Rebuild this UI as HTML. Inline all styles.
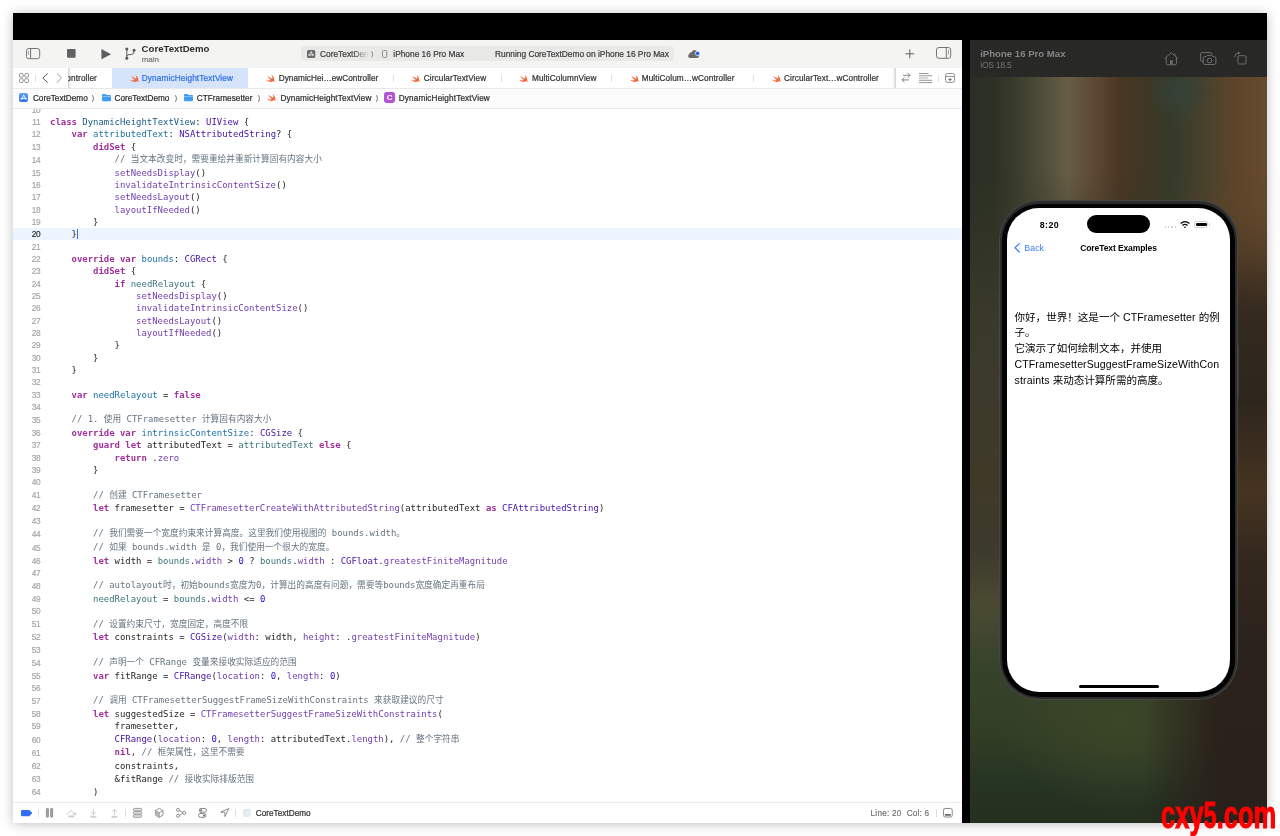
<!DOCTYPE html>
<html lang="zh"><head><meta charset="utf-8"><title>Xcode - DynamicHeightTextView</title>
<style>
*{box-sizing:border-box;margin:0;padding:0}
html,body{width:1280px;height:836px;overflow:hidden;background:#fff}
body{position:relative;font-family:"Liberation Sans","Noto Sans CJK SC",sans-serif;font-size:8px;color:#262626}
#frame{position:absolute;left:13px;top:13px;width:1254px;height:810px;background:#000;box-shadow:0 1px 11px rgba(0,0,0,.26)}
#xc{will-change:transform;position:absolute;left:13px;top:40px;width:948.5px;height:783px;background:#fff;overflow:hidden}
#toolbar{position:absolute;left:0;top:0;width:100%;height:28px;background:#f4f4f3}
#tabs{position:absolute;left:0;top:28px;width:100%;height:21px;background:#fff;border-bottom:1px solid #e9e9e9}
#jump{position:absolute;left:0;top:49px;width:100%;height:20px;background:#fcfcfc;border-bottom:1px solid #e9e9e9}
#editor{position:absolute;left:0;top:69px;width:100%;height:694.1px;background:#fff;overflow:hidden}
#bottom{position:absolute;left:0;top:763.1px;width:100%;height:20px;background:#fff;box-shadow:0 -1px 0 #ebebeb}
/* code */
.ln{position:absolute;left:0;width:100%;height:12px;line-height:12px;white-space:pre;margin-top:-69px}
.ln b{position:absolute;left:0;width:27.2px;text-align:right;font-weight:400;font-size:8.3px;letter-spacing:-.35px;color:#a3a3a3;font-family:"Liberation Sans",sans-serif}
.ln.cur b{color:#222}
.ln code{position:absolute;left:37px;font-family:"DejaVu Sans Mono","Liberation Mono",monospace;font-size:8.958px;color:#262626}
.ln code i{font-style:normal;font-family:"Noto Sans CJK SC",sans-serif;font-size:8.7px}
.k{color:#a3309a;font-weight:700}
.t{color:#1a5a83}.d{color:#1d72a8}.p{color:#3c757c}.s{color:#4510a6}.f{color:#7440ae}.c{color:#667481}.n{color:#280ed2}
#curline{position:absolute;left:0;width:100%;top:119.1px;height:12.4px;background:#ecf5ff}
#caret{position:absolute;left:64px;top:119.6px;width:1.3px;height:10.6px;background:#2f6fe0}
#sim{will-change:transform;position:absolute;left:970px;top:40px;width:297px;height:783px;background:#33352a;overflow:hidden}
#wm{will-change:transform;position:absolute;left:1160.8px;top:791.6px;font-family:"Liberation Sans",sans-serif;font-weight:700;font-size:39.6px;color:#fe0000;line-height:44px;transform-origin:0 0;transform:scaleX(.64);white-space:nowrap;-webkit-text-stroke:1.1px #fe0000;letter-spacing:.2px}
#wm span{font-size:36.2px}
.ic{position:absolute;display:block;overflow:visible}
.tt{position:absolute;left:128.6px;top:1.6px;font-weight:700;font-size:9.6px;line-height:14px;color:#2b2b2b;letter-spacing:.02px;white-space:nowrap}
.ts{position:absolute;left:128.7px;top:13.9px;font-size:8px;line-height:12px;color:#7b7b7b;white-space:nowrap}
.pill{position:absolute;left:287.5px;top:5.6px;width:373px;height:15.6px;border-radius:4px;background:#e9e9e8}
.pt{position:absolute;top:1.1px;line-height:15.6px;font-size:8.35px;color:#404040;white-space:nowrap}
.fade{position:absolute;left:52px;top:0;width:17px;height:15.6px;background:linear-gradient(90deg,rgba(233,233,232,0),#e9e9e8 95%)}
.tabact{position:absolute;left:99px;top:0;width:136.3px;height:20px;background:#d6e4fb}
.tb{position:absolute;top:.7px;line-height:20.6px;font-size:8.2px;color:#333;white-space:nowrap}
.tb.act{color:#2f6fe4}
.tsep{position:absolute;top:6.6px;width:1px;height:7.6px;background:#e0e0e0}
.nav{position:absolute;left:0;top:0;width:55.3px;height:20.4px;background:#fff}
.navsh{position:absolute;left:55.3px;top:0;width:3.6px;height:20.4px;background:linear-gradient(90deg,rgba(0,0,0,.2),rgba(0,0,0,.05) 50%,rgba(0,0,0,0))}
.tools{position:absolute;left:882.6px;top:0;width:66px;height:20.4px;background:#fff}
.toolsh{position:absolute;left:879px;top:0;width:3.6px;height:20.4px;background:linear-gradient(270deg,rgba(0,0,0,.2),rgba(0,0,0,.05) 50%,rgba(0,0,0,0))}
.jt{position:absolute;top:.3px;line-height:19.6px;font-size:8.2px;color:#2e2e2e;white-space:nowrap}
.cic{position:absolute;top:2.9px;width:11px;height:11.4px;border-radius:2.4px;background:#b652d8;color:#fff;font-weight:700;font-size:8px;line-height:11.6px;text-align:center}
.bsep{position:absolute;top:5.9px;width:1px;height:8px;background:#dedede}
.bt{position:absolute;top:1.2px;line-height:20.2px;font-size:8.2px;color:#757575;white-space:nowrap}
.shead{position:absolute;left:0;top:0;width:297px;height:37.2px;background:#282827}
.st1{position:absolute;left:10.2px;top:7.4px;font-weight:700;font-size:9.6px;line-height:13px;color:#868686;white-space:nowrap;letter-spacing:.02px}
.st2{position:absolute;left:10.3px;top:18.6px;font-size:8.7px;letter-spacing:-.33px;line-height:12px;color:#747474;white-space:nowrap}
.phone{position:absolute;left:29px;top:160px;width:239px;height:500px;border-radius:40px;background:#474642}
.bezel{position:absolute;left:1px;top:1px;right:1px;bottom:1px;border-radius:39px;background:#2c2c2c}
.bezel:before{content:"";position:absolute;left:2px;top:2.5px;right:2px;bottom:2px;border-radius:37px;background:#030303}
.screen{position:absolute;left:7px;top:7px;right:7px;bottom:7px;border-radius:32px;background:#fff;overflow:hidden}
.ptime{position:absolute;left:32.8px;top:10.7px;font-weight:700;font-size:8.8px;line-height:13px;color:#000;letter-spacing:.4px}
.island{position:absolute;left:79.8px;top:7.1px;width:63.6px;height:18.2px;border-radius:9.1px;background:#000}
.dots{position:absolute;left:158px;top:18.3px;width:12px;height:2px}
.dots i{position:absolute;top:0;width:1.3px;height:1.3px;border-radius:1px;background:#c8c8c8}
.dots i:nth-child(1){left:0}.dots i:nth-child(2){left:3.2px}.dots i:nth-child(3){left:6.3px}.dots i:nth-child(4){left:9.5px}
.batt{position:absolute;left:187px;top:12.9px;width:14.2px;height:6.9px;border-radius:2.2px;border:.8px solid #d0d0d0;background:#fff}
.batt b{position:absolute;left:.7px;top:.7px;right:.7px;bottom:.7px;border-radius:1.3px;background:#000}
.batt:after{content:"";position:absolute;left:13.8px;top:1.6px;width:1px;height:2.2px;border-radius:0 1px 1px 0;background:#d0d0d0}
.pback{position:absolute;left:17.3px;top:34.4px;font-size:8.8px;line-height:13px;color:#3b82f6;white-space:nowrap;letter-spacing:.05px}
.ptitle{position:absolute;left:0;width:100%;top:34.4px;text-align:center;font-weight:700;font-size:8.5px;letter-spacing:-.1px;line-height:13px;color:#000;white-space:nowrap}
.ptext{position:absolute;left:7.5px;top:101.7px;font-size:10.55px;line-height:15.75px;color:#000;white-space:nowrap;font-family:"Liberation Sans","Noto Sans CJK SC",sans-serif}
.ptext p{height:15.75px}
.homebar{position:absolute;left:71.9px;bottom:3.9px;width:80px;height:3.3px;border-radius:2px;background:#000}
.wall{position:absolute;left:0;top:37px;width:297px;height:746px;overflow:hidden;background:#2f2a20}
.w2{position:absolute;left:0;top:0;width:297px;height:746px;background:radial-gradient(ellipse 120px 90px at 150px 645px,rgba(61,71,40,.85),rgba(60,70,40,.5) 50%,rgba(56,67,42,0) 100%),linear-gradient(180deg,#353729 0,#353729 123px,#3a3a2c 273px,#3f3927 403px,#3c3a2c 474px,#4a4a32 528px,#37422a 591px,#323f25 654px,#263423 704px,#25301f 746px)}
.w3{position:absolute;left:0;top:0;width:297px;height:746px;background:linear-gradient(180deg,#5c4429 0,#5c4429 123px,#4c3926 163px,#3a2d20 208px,#33291f 243px,#2e261d 323px,#463421 413px,#33281e 483px,#2b221c 573px,#2a201b 746px);-webkit-mask-image:linear-gradient(90deg,transparent 0,transparent 175px,#000 250px);mask-image:linear-gradient(90deg,transparent 0,transparent 175px,#000 250px)}
.w1{position:absolute;left:0;top:0;width:297px;height:260px;background:linear-gradient(90deg,#2b2f23 0,#2d3125 8%,#383a2b 14.5%,#4a4a37 22.5%,#675d45 33%,#5f4b35 40.7%,#4a3623 50.5%,#3f3724 59%,#343a2a 67.7%,#4a422c 80%,#5e452b 90%,#674b2e 100%);-webkit-mask-image:linear-gradient(180deg,#000 0,#000 95px,transparent 235px);mask-image:linear-gradient(180deg,#000 0,#000 95px,transparent 235px)}
.w4{position:absolute;left:175px;top:-10px;width:70px;height:60px;background:radial-gradient(ellipse 35px 30px at 35px 25px,rgba(54,66,58,.9),rgba(54,66,58,0));}
.ptext span{letter-spacing:.15px}.ptext span.w{letter-spacing:.1px}
.tb,.jt,.pt,.bt,.ts{-webkit-text-stroke:.22px currentColor}
.ln b{-webkit-text-stroke:.15px currentColor}
.sb{position:absolute;width:2.4px;border-radius:1px;background:#3b3b39}
.ln code.u{top:-.8px}
.pji{position:absolute;left:6.1px;top:3.8px;width:9.4px;height:9.4px;border-radius:2.1px;background:linear-gradient(180deg,#5fa1fa,#2e6fee)}

</style></head>
<body>
<div id="frame"></div>
<div id="xc">
<div id="toolbar">
<svg class="ic" style="left:12.8px;top:7.9px" width="15" height="12" viewBox="0 0 15 12"><rect x=".5" y=".5" width="13.2" height="10.2" rx="2.3" fill="none" stroke="#747474"/><path d="M4.6 .5v10.2" stroke="#747474" fill="none"/><path d="M2.6 2.9v3.8" stroke="#8a8a8a" stroke-width=".8" fill="none"/></svg>
<svg class="ic" style="left:53.8px;top:9px" width="9" height="9" viewBox="0 0 9 9"><rect x="0" y="0" width="8.6" height="8.8" rx="1" fill="#626262"/></svg>
<svg class="ic" style="left:87.9px;top:8.5px" width="11" height="11" viewBox="0 0 11 11"><path d="M.4 .5Q.4 0 .9 .2L9.6 4.9Q10 5.1 9.6 5.4L.9 10.1Q.4 10.3 .4 9.8Z" fill="#5f5f5f"/></svg>
<svg class="ic" style="left:111px;top:7px" width="13" height="14" viewBox="0 0 13 14"><g fill="none" stroke="#5a5a5a" stroke-width="1"><path d="M2.8 3.2v7"/><path d="M10 4.4v.6q0 2.2-2.4 2.4L5 7.6Q2.8 7.8 2.8 9.6"/></g><circle cx="2.8" cy="2.1" r="1.5" fill="#5a5a5a"/><circle cx="2.8" cy="11.2" r="1.5" fill="#5a5a5a"/><circle cx="10" cy="3.3" r="1.5" fill="#5a5a5a"/></svg>
<div class="tt">CoreTextDemo</div>
<div class="ts">main</div>
<div class="pill">
<svg class="ic" style="left:6.5px;top:4.1px" width="9" height="9" viewBox="0 0 9 9"><rect width="8.3" height="8.1" rx="1.6" fill="#6c6c6c"/><path d="M4.15 1.9L2.2 5.7M4.15 1.9L6.1 5.7M1.7 4.9h4.9" stroke="#f0f0f0" stroke-width=".8" fill="none" stroke-linecap="round"/></svg>
<span class="pt" style="left:19.5px;width:49px;overflow:hidden">CoreTextDemo</span><span class="fade"></span>
<svg class="ic" style="left:70px;top:5.2px" width="4" height="7" viewBox="0 0 4 7"><path d="M.7 .3Q2.9 3.3 .7 6.3" stroke="#6e6e6e" stroke-width=".8" fill="none"/></svg>
<svg class="ic" style="left:81.5px;top:4.1px" width="6" height="9" viewBox="0 0 6 9"><rect x=".5" y=".5" width="4.3" height="6.9" rx="1" fill="none" stroke="#8c8c8c"/></svg>
<span class="pt" style="left:92.8px">iPhone 16 Pro Max</span>
<span class="pt" style="left:194.5px">Running CoreTextDemo on iPhone 16 Pro Max</span>
</div>
<svg class="ic" style="left:674.9px;top:9.9px" width="12" height="8.2" viewBox="0 0 12 8.2"><path d="M2.2 8Q.1 8 .1 6Q.1 4.4 1.4 4Q1.4 2.4 2.9 2.2Q3.3 2.1 3.7 2.3Q4.5 .1 6.6 .1Q8.8 .1 9.3 2.6Q11.2 3 11.2 5.2Q11.2 8 8.8 8Z" fill="#6a6a6a"/><circle cx="9.6" cy="3.4" r="2.25" fill="#1f5ff0" stroke="#f6f5f2" stroke-width=".8"/></svg>
<svg class="ic" style="left:892px;top:8.6px" width="10" height="10" viewBox="0 0 10 10"><path d="M4.8 .4v8.8M.4 4.8h8.8" stroke="#5e5e5e" stroke-width="1" fill="none"/></svg>
<svg class="ic" style="left:922.6px;top:7.4px" width="16" height="12" viewBox="0 0 16 12"><rect x=".5" y=".5" width="14.2" height="10.8" rx="2.4" fill="none" stroke="#757575"/><path d="M10.3 .5v10.8" stroke="#757575" fill="none"/><path d="M12.5 3v4.2" stroke="#8a8a8a" stroke-width=".8" fill="none"/></svg>

</div>
<div id="tabs">
<div class="tabact"></div>
<span class="tb clip" style="left:49.10px;letter-spacing:0.120px">controller</span>
<svg class="ic sw" style="left:116.8px;top:6.5px" width="8.8" height="7.2" viewBox="2.4 3.4 18.3 16.6" preserveAspectRatio="none"><path fill="#f0653a" d="M13.543 3.41c4.114 2.47 6.545 7.162 5.549 11.131-.024.093-.05.181-.076.272l.002.001c2.062 2.538 1.5 5.258 1.236 4.745-1.072-2.086-3.066-1.568-4.088-1.043a6.803 6.803 0 0 1-.281.158l-.02.012-.002.002c-2.115 1.123-4.957 1.205-7.812-.022a12.568 12.568 0 0 1-5.64-4.838c.649.48 1.35.902 2.097 1.252 3.019 1.414 6.051 1.311 8.197-.002C9.651 12.73 7.101 9.67 5.146 7.191a10.628 10.628 0 0 1-1.005-1.384c2.34 2.142 6.038 4.83 7.365 5.576C8.69 8.408 6.208 4.743 6.324 4.86c4.436 4.47 8.528 6.996 8.528 6.996.154.085.27.154.36.213.085-.215.16-.437.224-.668.708-2.588-.09-5.548-1.893-7.992z"/></svg>
<span class="tb act" style="left:128.75px;letter-spacing:0.154px">DynamicHeightTextView</span>
<svg class="ic sw" style="left:253.25px;top:6.5px" width="8.8" height="7.2" viewBox="2.4 3.4 18.3 16.6" preserveAspectRatio="none"><path fill="#f0653a" d="M13.543 3.41c4.114 2.47 6.545 7.162 5.549 11.131-.024.093-.05.181-.076.272l.002.001c2.062 2.538 1.5 5.258 1.236 4.745-1.072-2.086-3.066-1.568-4.088-1.043a6.803 6.803 0 0 1-.281.158l-.02.012-.002.002c-2.115 1.123-4.957 1.205-7.812-.022a12.568 12.568 0 0 1-5.64-4.838c.649.48 1.35.902 2.097 1.252 3.019 1.414 6.051 1.311 8.197-.002C9.651 12.73 7.101 9.67 5.146 7.191a10.628 10.628 0 0 1-1.005-1.384c2.34 2.142 6.038 4.83 7.365 5.576C8.69 8.408 6.208 4.743 6.324 4.86c4.436 4.47 8.528 6.996 8.528 6.996.154.085.27.154.36.213.085-.215.16-.437.224-.668.708-2.588-.09-5.548-1.893-7.992z"/></svg>
<span class="tb " style="left:265.75px;letter-spacing:0.057px">DynamicHei…ewController</span>
<svg class="ic sw" style="left:398.2px;top:6.5px" width="8.8" height="7.2" viewBox="2.4 3.4 18.3 16.6" preserveAspectRatio="none"><path fill="#f0653a" d="M13.543 3.41c4.114 2.47 6.545 7.162 5.549 11.131-.024.093-.05.181-.076.272l.002.001c2.062 2.538 1.5 5.258 1.236 4.745-1.072-2.086-3.066-1.568-4.088-1.043a6.803 6.803 0 0 1-.281.158l-.02.012-.002.002c-2.115 1.123-4.957 1.205-7.812-.022a12.568 12.568 0 0 1-5.64-4.838c.649.48 1.35.902 2.097 1.252 3.019 1.414 6.051 1.311 8.197-.002C9.651 12.73 7.101 9.67 5.146 7.191a10.628 10.628 0 0 1-1.005-1.384c2.34 2.142 6.038 4.83 7.365 5.576C8.69 8.408 6.208 4.743 6.324 4.86c4.436 4.47 8.528 6.996 8.528 6.996.154.085.27.154.36.213.085-.215.16-.437.224-.668.708-2.588-.09-5.548-1.893-7.992z"/></svg>
<span class="tb " style="left:410.80px;letter-spacing:0.099px">CircularTextView</span>
<svg class="ic sw" style="left:506.4px;top:6.5px" width="8.8" height="7.2" viewBox="2.4 3.4 18.3 16.6" preserveAspectRatio="none"><path fill="#f0653a" d="M13.543 3.41c4.114 2.47 6.545 7.162 5.549 11.131-.024.093-.05.181-.076.272l.002.001c2.062 2.538 1.5 5.258 1.236 4.745-1.072-2.086-3.066-1.568-4.088-1.043a6.803 6.803 0 0 1-.281.158l-.02.012-.002.002c-2.115 1.123-4.957 1.205-7.812-.022a12.568 12.568 0 0 1-5.64-4.838c.649.48 1.35.902 2.097 1.252 3.019 1.414 6.051 1.311 8.197-.002C9.651 12.73 7.101 9.67 5.146 7.191a10.628 10.628 0 0 1-1.005-1.384c2.34 2.142 6.038 4.83 7.365 5.576C8.69 8.408 6.208 4.743 6.324 4.86c4.436 4.47 8.528 6.996 8.528 6.996.154.085.27.154.36.213.085-.215.16-.437.224-.668.708-2.588-.09-5.548-1.893-7.992z"/></svg>
<span class="tb " style="left:519.00px;letter-spacing:0.094px">MultiColumnView</span>
<svg class="ic sw" style="left:616.8px;top:6.5px" width="8.8" height="7.2" viewBox="2.4 3.4 18.3 16.6" preserveAspectRatio="none"><path fill="#f0653a" d="M13.543 3.41c4.114 2.47 6.545 7.162 5.549 11.131-.024.093-.05.181-.076.272l.002.001c2.062 2.538 1.5 5.258 1.236 4.745-1.072-2.086-3.066-1.568-4.088-1.043a6.803 6.803 0 0 1-.281.158l-.02.012-.002.002c-2.115 1.123-4.957 1.205-7.812-.022a12.568 12.568 0 0 1-5.64-4.838c.649.48 1.35.902 2.097 1.252 3.019 1.414 6.051 1.311 8.197-.002C9.651 12.73 7.101 9.67 5.146 7.191a10.628 10.628 0 0 1-1.005-1.384c2.34 2.142 6.038 4.83 7.365 5.576C8.69 8.408 6.208 4.743 6.324 4.86c4.436 4.47 8.528 6.996 8.528 6.996.154.085.27.154.36.213.085-.215.16-.437.224-.668.708-2.588-.09-5.548-1.893-7.992z"/></svg>
<span class="tb " style="left:628.80px;letter-spacing:0.101px">MultiColum…wController</span>
<svg class="ic sw" style="left:759.2px;top:6.5px" width="8.8" height="7.2" viewBox="2.4 3.4 18.3 16.6" preserveAspectRatio="none"><path fill="#f0653a" d="M13.543 3.41c4.114 2.47 6.545 7.162 5.549 11.131-.024.093-.05.181-.076.272l.002.001c2.062 2.538 1.5 5.258 1.236 4.745-1.072-2.086-3.066-1.568-4.088-1.043a6.803 6.803 0 0 1-.281.158l-.02.012-.002.002c-2.115 1.123-4.957 1.205-7.812-.022a12.568 12.568 0 0 1-5.64-4.838c.649.48 1.35.902 2.097 1.252 3.019 1.414 6.051 1.311 8.197-.002C9.651 12.73 7.101 9.67 5.146 7.191a10.628 10.628 0 0 1-1.005-1.384c2.34 2.142 6.038 4.83 7.365 5.576C8.69 8.408 6.208 4.743 6.324 4.86c4.436 4.47 8.528 6.996 8.528 6.996.154.085.27.154.36.213.085-.215.16-.437.224-.668.708-2.588-.09-5.548-1.893-7.992z"/></svg>
<span class="tb " style="left:771.10px;letter-spacing:0.081px">CircularText…wController</span>
<i class="tsep" style="left:379.9px"></i>
<i class="tsep" style="left:487.9px"></i>
<i class="tsep" style="left:598.2px"></i>
<i class="tsep" style="left:740.1px"></i>
<div class="nav">
<svg class="ic" style="left:6px;top:5px" width="10" height="10" viewBox="0 0 10 10"><g fill="none" stroke="#8a8a8a" stroke-width=".9"><rect x=".5" y=".5" width="3.7" height="3.7" rx=".9"/><rect x="5.8" y=".5" width="3.7" height="3.7" rx=".9"/><rect x=".5" y="5.8" width="3.7" height="3.7" rx=".9"/><rect x="5.8" y="5.8" width="3.7" height="3.7" rx=".9"/></g></svg>
<i class="tsep" style="left:22px;background:#e2e2e2"></i>
<svg class="ic" style="left:29px;top:5px" width="7" height="10" viewBox="0 0 7 10"><path d="M5.6 .5L.8 5L5.6 9.5" fill="none" stroke="#5a5a5a" stroke-width="1"/></svg>
<svg class="ic" style="left:43px;top:5px" width="7" height="10" viewBox="0 0 7 10"><path d="M.8 .5L5.6 5L.8 9.5" fill="none" stroke="#a0a0a0" stroke-width="1"/></svg>
</div><div class="navsh"></div>
<div class="tools">
<svg class="ic" style="left:5.3px;top:3.8px" width="10" height="11" viewBox="0 0 10 11"><g fill="none" stroke="#7c7c7c" stroke-width=".9" stroke-linecap="round" stroke-linejoin="round"><path d="M2.4 3.3H8.9M6.8 1.1L9 3.3L6.8 5.5"/><path d="M7.6 7.9H1.1M3.2 5.7L1 7.9L3.2 10.1"/></g></svg>
<svg class="ic" style="left:23px;top:5.2px" width="14" height="11" viewBox="0 0 14 11"><g fill="none" stroke-width=".9"><path d="M0 .5H9.4" stroke="#8a8a8a"/><path d="M0 2.75H13.2" stroke="#8a8a8a"/><path d="M0 5H9.2" stroke="#c4c4c4" stroke-width="1.3"/><path d="M0 7.3H13.2" stroke="#8a8a8a"/><path d="M0 9.6H13.2" stroke="#8a8a8a"/></g></svg>
<i class="tsep" style="left:42.4px;background:#e2e2e2"></i>
<svg class="ic" style="left:49.4px;top:5.4px" width="11" height="11" viewBox="0 0 11 11"><g fill="none" stroke="#858585" stroke-width=".9"><rect x=".5" y=".5" width="9.1" height="8.9" rx="2"/><path d="M.5 3.4H9.6"/><path d="M5.05 4.9V8.3M3.3 6.6H6.8" stroke="#6a6a6a"/></g></svg>
</div><div class="toolsh"></div>
</div>
<div id="jump">
<div class="pji"><svg class="ic" style="left:0;top:0" width="9.4" height="9.4" viewBox="0 0 9.4 9.4"><path d="M4.7 2.1L2.5 6.4M4.7 2.1L6.9 6.4M1.9 5.5h5.6" stroke="#fff" stroke-width=".9" fill="none" stroke-linecap="round"/></svg></div>
<span class="jt" style="left:19.90px;letter-spacing:0.018px">CoreTextDemo</span>
<svg class="ic" style="left:78.80px;top:6.1px" width="3" height="7" viewBox="0 0 3 7"><path d="M.5 .2Q2.6 3.5 .5 6.8" stroke="#5e5e5e" stroke-width=".85" fill="none"/></svg>
<svg class="ic" style="left:88.50px;top:5.2px" width="9" height="7.2" viewBox="0 0 9 7.2"><path d="M0 1Q0 0 1 0H3.2Q3.8 0 4.2 .5L4.6 1H8Q9 1 9 2V6.2Q9 7.2 8 7.2H1Q0 7.2 0 6.2Z" fill="#3f9df3"/><path d="M0 2.2H9V3H0Z" fill="#8ecbfb"/></svg>
<span class="jt" style="left:101.50px;letter-spacing:0.026px">CoreTextDemo</span>
<svg class="ic" style="left:161.90px;top:6.1px" width="3" height="7" viewBox="0 0 3 7"><path d="M.5 .2Q2.6 3.5 .5 6.8" stroke="#5e5e5e" stroke-width=".85" fill="none"/></svg>
<svg class="ic" style="left:170.80px;top:5.2px" width="9" height="7.2" viewBox="0 0 9 7.2"><path d="M0 1Q0 0 1 0H3.2Q3.8 0 4.2 .5L4.6 1H8Q9 1 9 2V6.2Q9 7.2 8 7.2H1Q0 7.2 0 6.2Z" fill="#3f9df3"/><path d="M0 2.2H9V3H0Z" fill="#8ecbfb"/></svg>
<span class="jt" style="left:183.75px;letter-spacing:0.048px">CTFramesetter</span>
<svg class="ic" style="left:244.60px;top:6.1px" width="3" height="7" viewBox="0 0 3 7"><path d="M.5 .2Q2.6 3.5 .5 6.8" stroke="#5e5e5e" stroke-width=".85" fill="none"/></svg>
<svg class="ic sw" style="left:254.2px;top:5.4px" width="8.8" height="7.2" viewBox="2.4 3.4 18.3 16.6" preserveAspectRatio="none"><path fill="#f0653a" d="M13.543 3.41c4.114 2.47 6.545 7.162 5.549 11.131-.024.093-.05.181-.076.272l.002.001c2.062 2.538 1.5 5.258 1.236 4.745-1.072-2.086-3.066-1.568-4.088-1.043a6.803 6.803 0 0 1-.281.158l-.02.012-.002.002c-2.115 1.123-4.957 1.205-7.812-.022a12.568 12.568 0 0 1-5.64-4.838c.649.48 1.35.902 2.097 1.252 3.019 1.414 6.051 1.311 8.197-.002C9.651 12.73 7.101 9.67 5.146 7.191a10.628 10.628 0 0 1-1.005-1.384c2.34 2.142 6.038 4.83 7.365 5.576C8.69 8.408 6.208 4.743 6.324 4.86c4.436 4.47 8.528 6.996 8.528 6.996.154.085.27.154.36.213.085-.215.16-.437.224-.668.708-2.588-.09-5.548-1.893-7.992z"/></svg>
<span class="jt" style="left:267.40px;letter-spacing:0.145px">DynamicHeightTextView</span>
<svg class="ic" style="left:362.60px;top:6.1px" width="3" height="7" viewBox="0 0 3 7"><path d="M.5 .2Q2.6 3.5 .5 6.8" stroke="#5e5e5e" stroke-width=".85" fill="none"/></svg>
<div class="cic" style="left:371.10px">C</div>
<span class="jt" style="left:385.75px;letter-spacing:0.145px">DynamicHeightTextView</span>
</div>
<div id="editor">
<div id="curline"></div>
<div class="ln" style="top:63.73px"><b>10</b><code></code></div>
<div class="ln" style="top:76.05px"><b>11</b><code><span class="k">class</span> <span class="t">DynamicHeightTextView</span>: <span class="s">UIView</span> {</code></div>
<div class="ln" style="top:88.38px"><b>12</b><code>    <span class="k">var</span> <span class="d">attributedText</span>: <span class="s">NSAttributedString</span>? {</code></div>
<div class="ln" style="top:100.70px"><b>13</b><code>        <span class="k">didSet</span> {</code></div>
<div class="ln" style="top:113.72px"><b>14</b><code class="u">            <span class="c">// <i>当文本改变时，需要重绘并重新计算固有内容大小</i></span></code></div>
<div class="ln" style="top:126.77px"><b>15</b><code>            <span class="f">setNeedsDisplay</span>()</code></div>
<div class="ln" style="top:139.10px"><b>16</b><code>            <span class="f">invalidateIntrinsicContentSize</span>()</code></div>
<div class="ln" style="top:151.42px"><b>17</b><code>            <span class="f">setNeedsLayout</span>()</code></div>
<div class="ln" style="top:163.75px"><b>18</b><code>            <span class="f">layoutIfNeeded</span>()</code></div>
<div class="ln" style="top:176.07px"><b>19</b><code>        }</code></div>
<div class="ln cur" style="top:188.40px"><b>20</b><code>    }</code></div>
<div class="ln" style="top:200.72px"><b>21</b><code></code></div>
<div class="ln" style="top:213.05px"><b>22</b><code>    <span class="k">override</span> <span class="k">var</span> <span class="d">bounds</span>: <span class="s">CGRect</span> {</code></div>
<div class="ln" style="top:225.37px"><b>23</b><code>        <span class="k">didSet</span> {</code></div>
<div class="ln" style="top:237.70px"><b>24</b><code>            <span class="k">if</span> <span class="p">needRelayout</span> {</code></div>
<div class="ln" style="top:250.02px"><b>25</b><code>                <span class="f">setNeedsDisplay</span>()</code></div>
<div class="ln" style="top:262.35px"><b>26</b><code>                <span class="f">invalidateIntrinsicContentSize</span>()</code></div>
<div class="ln" style="top:274.67px"><b>27</b><code>                <span class="f">setNeedsLayout</span>()</code></div>
<div class="ln" style="top:287.00px"><b>28</b><code>                <span class="f">layoutIfNeeded</span>()</code></div>
<div class="ln" style="top:299.32px"><b>29</b><code>            }</code></div>
<div class="ln" style="top:311.65px"><b>30</b><code>        }</code></div>
<div class="ln" style="top:323.97px"><b>31</b><code>    }</code></div>
<div class="ln" style="top:336.30px"><b>32</b><code></code></div>
<div class="ln" style="top:348.62px"><b>33</b><code>    <span class="k">var</span> <span class="d">needRelayout</span> = <span class="k">false</span></code></div>
<div class="ln" style="top:360.95px"><b>34</b><code></code></div>
<div class="ln" style="top:373.97px"><b>35</b><code class="u">    <span class="c">// 1. <i>使用</i> CTFramesetter <i>计算固有内容大小</i></span></code></div>
<div class="ln" style="top:387.02px"><b>36</b><code>    <span class="k">override</span> <span class="k">var</span> <span class="d">intrinsicContentSize</span>: <span class="s">CGSize</span> {</code></div>
<div class="ln" style="top:399.35px"><b>37</b><code>        <span class="k">guard</span> <span class="k">let</span> attributedText = <span class="p">attributedText</span> <span class="k">else</span> {</code></div>
<div class="ln" style="top:411.67px"><b>38</b><code>            <span class="k">return</span> .<span class="f">zero</span></code></div>
<div class="ln" style="top:424.00px"><b>39</b><code>        }</code></div>
<div class="ln" style="top:436.32px"><b>40</b><code></code></div>
<div class="ln" style="top:449.35px"><b>41</b><code class="u">        <span class="c">// <i>创建</i> CTFramesetter</span></code></div>
<div class="ln" style="top:462.40px"><b>42</b><code>        <span class="k">let</span> framesetter = <span class="f">CTFramesetterCreateWithAttributedString</span>(attributedText <span class="k">as</span> <span class="s">CFAttributedString</span>)</code></div>
<div class="ln" style="top:474.72px"><b>43</b><code></code></div>
<div class="ln" style="top:487.75px"><b>44</b><code class="u">        <span class="c">// <i>我们需要一个宽度约束来计算高度。这里我们使用视图的</i> bounds.width<i>。</i></span></code></div>
<div class="ln" style="top:501.50px"><b>45</b><code class="u">        <span class="c">// <i>如果</i> bounds.width <i>是</i> 0<i>，我们使用一个很大的宽度。</i></span></code></div>
<div class="ln" style="top:514.55px"><b>46</b><code>        <span class="k">let</span> width = <span class="p">bounds</span>.<span class="f">width</span> &gt; <span class="n">0</span> ? <span class="p">bounds</span>.<span class="f">width</span> : <span class="s">CGFloat</span>.<span class="f">greatestFiniteMagnitude</span></code></div>
<div class="ln" style="top:526.87px"><b>47</b><code></code></div>
<div class="ln" style="top:539.90px"><b>48</b><code class="u">        <span class="c">// autolayout<i>时，初始</i>bounds<i>宽度为</i>0<i>，计算出的高度有问题，需要等</i>bounds<i>宽度确定再重布局</i></span></code></div>
<div class="ln" style="top:552.95px"><b>49</b><code>        <span class="p">needRelayout</span> = <span class="p">bounds</span>.<span class="f">width</span> &lt;= <span class="n">0</span></code></div>
<div class="ln" style="top:565.27px"><b>50</b><code></code></div>
<div class="ln" style="top:578.30px"><b>51</b><code class="u">        <span class="c">// <i>设置约束尺寸，宽度固定，高度不限</i></span></code></div>
<div class="ln" style="top:591.35px"><b>52</b><code>        <span class="k">let</span> constraints = <span class="s">CGSize</span>(<span class="f">width</span>: width, <span class="f">height</span>: .<span class="f">greatestFiniteMagnitude</span>)</code></div>
<div class="ln" style="top:603.67px"><b>53</b><code></code></div>
<div class="ln" style="top:616.70px"><b>54</b><code class="u">        <span class="c">// <i>声明一个</i> CFRange <i>变量来接收实际适应的范围</i></span></code></div>
<div class="ln" style="top:629.75px"><b>55</b><code>        <span class="k">var</span> fitRange = <span class="s">CFRange</span>(<span class="f">location</span>: <span class="n">0</span>, <span class="f">length</span>: <span class="n">0</span>)</code></div>
<div class="ln" style="top:642.08px"><b>56</b><code></code></div>
<div class="ln" style="top:655.10px"><b>57</b><code class="u">        <span class="c">// <i>调用</i> CTFramesetterSuggestFrameSizeWithConstraints <i>来获取建议的尺寸</i></span></code></div>
<div class="ln" style="top:668.15px"><b>58</b><code>        <span class="k">let</span> suggestedSize = <span class="f">CTFramesetterSuggestFrameSizeWithConstraints</span>(</code></div>
<div class="ln" style="top:680.48px"><b>59</b><code>            framesetter,</code></div>
<div class="ln" style="top:693.50px"><b>60</b><code class="u">            <span class="s">CFRange</span>(<span class="f">location</span>: <span class="n">0</span>, <span class="f">length</span>: attributedText.<span class="f">length</span>), <span class="c">// <i>整个字符串</i></span></code></div>
<div class="ln" style="top:707.25px"><b>61</b><code class="u">            <span class="k">nil</span>, <span class="c">// <i>框架属性，这里不需要</i></span></code></div>
<div class="ln" style="top:720.30px"><b>62</b><code>            constraints,</code></div>
<div class="ln" style="top:733.33px"><b>63</b><code class="u">            &amp;fitRange <span class="c">// <i>接收实际排版范围</i></span></code></div>
<div class="ln" style="top:746.38px"><b>64</b><code>        )</code></div>
<div class="ln" style="top:758.70px"><b>65</b><code></code></div>
<div id="caret"></div>
</div>
<div id="bottom">
<svg class="ic" style="left:8.10px;top:7.10px" width="11" height="6.2" viewBox="0 0 11 6.2"><path d="M1.2 0H8.2L10.9 2.6V3.6L8.2 6.2H1.2Q0 6.2 0 5V1.2Q0 0 1.2 0Z" fill="#2f6ff0"/></svg>
<i class="bsep" style="left:24.6px"></i>
<svg class="ic" style="left:32.70px;top:5.00px" width="7.2" height="9.7" viewBox="0 0 7.2 9.7"><g fill="#a2a2a2" stroke="#7e7e7e" stroke-width=".7"><rect x=".35" y=".35" width="2.1" height="9" rx="1"/><rect x="4.6" y=".35" width="2.1" height="9" rx="1"/></g></svg>
<svg class="ic" style="left:53.10px;top:6.50px" width="10.2" height="8" viewBox="0 0 10.2 8"><g fill="none" stroke="#c6c6c6" stroke-width=".9" stroke-linejoin="round" stroke-linecap="round"><path d="M.6 4.6L4.9 .6L9.2 4.4"/><path d="M9.4 2.4V4.6H7.2"/></g><rect x="2.2" y="5.6" width="6" height="2" rx="1" fill="#cfcfcf"/></svg>
<svg class="ic" style="left:76.50px;top:5.50px" width="6.8" height="9" viewBox="0 0 6.8 9"><g fill="none" stroke="#c6c6c6" stroke-width=".9" stroke-linecap="round" stroke-linejoin="round"><path d="M3.4 .4V5.2"/><path d="M1.2 3.2L3.4 5.4L5.6 3.2"/></g><rect x=".3" y="6.8" width="6.2" height="2" rx="1" fill="#cfcfcf"/></svg>
<svg class="ic" style="left:98.10px;top:5.50px" width="6.8" height="9" viewBox="0 0 6.8 9"><g fill="none" stroke="#c6c6c6" stroke-width=".9" stroke-linecap="round" stroke-linejoin="round"><path d="M3.4 5.6V.6"/><path d="M1.2 2.6L3.4 .4L5.6 2.6"/></g><rect x=".3" y="6.8" width="6.2" height="2" rx="1" fill="#cfcfcf"/></svg>
<i class="bsep" style="left:112.1px"></i>
<svg class="ic" style="left:119.70px;top:5.00px" width="9.2" height="9.8" viewBox="0 0 9.2 9.8"><g fill="#e6e6e6" stroke="#858585" stroke-width=".8"><rect x=".4" y=".4" width="8.3" height="2.5" rx="1"/><rect x=".4" y="3.6" width="8.3" height="2.5" rx="1"/><rect x=".4" y="6.8" width="8.3" height="2.5" rx="1"/></g></svg>
<svg class="ic" style="left:141.90px;top:5.00px" width="8.4" height="9.8" viewBox="0 0 8.4 9.8"><g fill="none" stroke="#7d7d7d" stroke-width=".8" stroke-linejoin="round"><path d="M4.2 .4L8 2.5V7.2L4.2 9.4L.4 7.2V2.5Z"/><path d="M.4 2.5L4.2 4.7L8 2.5M4.2 4.7V9.4"/></g><path d="M.6 2.8L4 4.8V9L.6 7Z" fill="#b4b4b4"/></svg>
<svg class="ic" style="left:162.70px;top:5.00px" width="10.2" height="9.8" viewBox="0 0 10.2 9.8"><g fill="none" stroke="#787878" stroke-width=".8"><circle cx="2" cy="1.9" r="1.5"/><circle cx="2" cy="7.9" r="1.5"/><circle cx="8.2" cy="4.9" r="1.5"/><path d="M3.3 2.6L6.9 4.3M3.3 7.2L6.9 5.5"/></g></svg>
<svg class="ic" style="left:185.00px;top:5.00px" width="9.2" height="9.8" viewBox="0 0 9.2 9.8"><g fill="none" stroke="#6f6f6f" stroke-width=".85"><rect x="1.2" y=".45" width="7.4" height="3.7" rx="1.85"/><rect x=".5" y="5.6" width="7.4" height="3.7" rx="1.85"/><path d="M3 4.2L2.4 5.6"/></g><circle cx="3.1" cy="2.3" r="1" fill="#6f6f6f"/><circle cx="6" cy="7.45" r="1" fill="#6f6f6f"/></svg>
<svg class="ic" style="left:206.90px;top:5.40px" width="9.2" height="9.2" viewBox="0 0 9.2 9.2"><path d="M8.7 .5L.6 4.2H4.9V8.6Z" fill="none" stroke="#7a7a7a" stroke-width=".85" stroke-linejoin="round"/></svg>
<i class="bsep" style="left:222.1px"></i>
<svg class="ic" style="left:230.00px;top:5.90px" width="7.8" height="7.8" viewBox="0 0 7.8 7.8"><rect width="7.6" height="7.8" rx="1.2" fill="#dfe8ee"/><path d="M2.6 .6V7.2M5 .6V7.2M.6 2.7H7M.6 5.1H7" stroke="#eef4f8" stroke-width=".5"/></svg>
<span class="bt" style="left:242.75px;letter-spacing:0.026px;color:#303030">CoreTextDemo</span>
<span class="bt" style="left:857.60px;letter-spacing:0.215px">Line: 20</span>
<span class="bt" style="left:893.70px;letter-spacing:0.180px">Col: 6</span>
<i class="bsep" style="left:922.8px"></i>
<svg class="ic" style="left:930.00px;top:4.90px" width="9.8" height="9.6" viewBox="0 0 9.8 9.6"><rect x=".45" y=".45" width="8.8" height="8.6" rx="1.8" fill="none" stroke="#7c7c7c" stroke-width=".9"/><rect x="1.9" y="6" width="5.9" height="1.8" rx=".4" fill="#6a6a6a"/></svg>
</div>
</div>
<div id="sim">
<div class="wall"><div class="w2"></div><div class="w3"></div><div class="w1"></div><div class="w4"></div></div>
<div class="shead">
<div class="st1" style="letter-spacing:0.000px">iPhone 16 Pro Max</div>
<div class="st2">iOS 18.5</div>
<svg class="ic" style="left:194.40px;top:11.60px" width="14.6" height="13.4" viewBox="0 0 14.6 13.4"><g fill="none" stroke="#6e6e6e" stroke-width="1" stroke-linejoin="round"><path d="M.6 6.4L7.3 .7L14 6.4"/><path d="M2.2 5.4V11.6Q2.2 12.8 3.4 12.8H11.2Q12.4 12.8 12.4 11.6V5.4"/><path d="M10.9 3.6V1.6"/></g><rect x="6" y="8.2" width="2.7" height="4.2" fill="#6e6e6e"/></svg>
<svg class="ic" style="left:230.00px;top:12.00px" width="16.4" height="13" viewBox="0 0 16.4 13"><g fill="none" stroke="#6e6e6e" stroke-width="1"><path d="M3 9.4H2.2Q.5 9.4 .5 7.7V2.2Q.5 .5 2.2 .5H10.2Q11.9 .5 11.9 2.2V2.6"/><path d="M4.9 4.6H6.2L7.2 3.4H11.8L12.8 4.6H14.2Q15.9 4.6 15.9 6.3V10.8Q15.9 12.5 14.2 12.5H4.9Q3.2 12.5 3.2 10.8V6.3Q3.2 4.6 4.9 4.6Z"/><circle cx="9.5" cy="8.5" r="2.3"/></g></svg>
<svg class="ic" style="left:263.60px;top:10.60px" width="13" height="14" viewBox="0 0 13 14"><g fill="none" stroke="#6e6e6e" stroke-width="1"><rect x="3.9" y="4.7" width="8.1" height="8.3" rx="1.3"/><path d="M.6 6.2Q.5 2.2 4.4 2"/></g><path d="M4 .2L6.4 2L4 3.8Z" fill="#6e6e6e"/></svg>
</div>
<i class="sb" style="left:27.7px;top:251px;height:15.4px"></i><i class="sb" style="left:27.7px;top:296px;height:28.7px"></i><i class="sb" style="left:27.7px;top:334.3px;height:27.7px"></i><i class="sb" style="left:266.8px;top:307px;height:50px"></i>
<div class="phone"><div class="bezel"><div class="screen">
<div class="ptime">8:20</div>
<div class="island"></div>
<div class="dots"><i></i><i></i><i></i><i></i></div>
<svg class="ic" style="left:173px;top:12.6px" width="10" height="7.4" viewBox="0 0 10 7.4"><g fill="none" stroke="#000" stroke-width="1.25" stroke-linecap="butt"><path d="M.6 2.6Q5 -1.2 9.4 2.6"/><path d="M2.4 4.5Q5 2.3 7.6 4.5"/></g><path d="M3.9 6.1L5 7.3L6.1 6.1Q5 5.1 3.9 6.1Z" fill="#000"/></svg>
<div class="batt"><b></b></div>
<svg class="ic" style="left:6.9px;top:35.3px" width="6.4" height="9.6" viewBox="0 0 6.4 9.6"><path d="M5.4 .6L1 4.8L5.4 9" fill="none" stroke="#3b82f6" stroke-width="1.2" stroke-linecap="round" stroke-linejoin="round"/></svg>
<div class="pback">Back</div>
<div class="ptitle">CoreText Examples</div>
<div class="ptext"><p>你好，世界！这是一个 <span>CTFramesetter</span> 的例</p><p>子。</p><p>它演示了如何绘制文本，并使用</p><p><span class="w">CTFramesetterSuggestFrameSizeWithCon</span></p><p><span>straints</span> 来动态计算所需的高度。</p></div>
<div class="homebar"></div>
</div></div></div>
</div>
<div id="wm">cxy<span>5</span>.com</div>
</body></html>
